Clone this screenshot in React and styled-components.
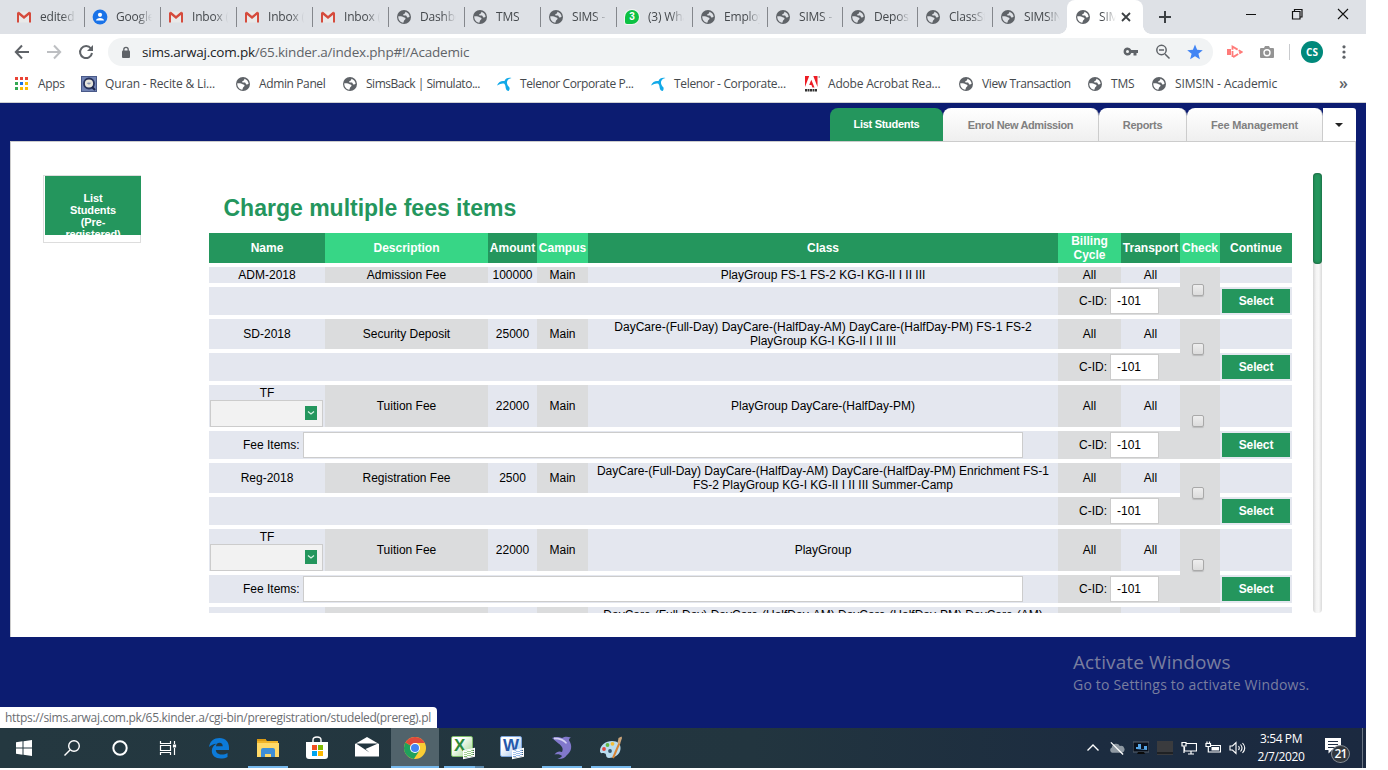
import React from 'react';
import styled, { createGlobalStyle } from 'styled-components';

const GREEN = '#24965d';
const LIGHT = '#37d686';
const NAVY = '#0c1c71';
const UI = '"Open Sans", "Noto Sans", sans-serif';
const ARIAL = '"Liberation Sans", Arial, sans-serif';

const Global = createGlobalStyle`
  * { box-sizing: border-box; }
  html, body { margin: 0; background: #fff; overflow: hidden; }
`;

const Screen = styled.div`
  width: 1366px;
  height: 768px;
  display: flex;
  flex-direction: column;
  position: relative;
  font-family: ${UI};
  overflow: hidden;
`;

/* ---------- browser chrome ---------- */
const TabStrip = styled.div`
  height: 34px;
  flex: none;
  background: #dee1e6;
  display: flex;
  padding-left: 9px;
`;
const BrowserTab = styled.div`
  width: ${p => p.$w || 76}px;
  height: 34px;
  display: flex;
  align-items: center;
  padding-left: 7px;
  background: linear-gradient(#84878c, #84878c) right 7px / 1px 20px no-repeat;
  ${p => p.$plain && 'background: none;'}
`;
const ActiveTab = styled.div`
  width: 76px;
  height: 34px;
  display: flex;
  align-items: center;
  padding-left: 8px;
  background: #fff;
  border-radius: 8px 8px 0 0;
  position: relative;
  &::before, &::after {
    content: '';
    position: absolute;
    bottom: 0;
    width: 8px;
    height: 8px;
  }
  &::before { left: -8px; background: radial-gradient(circle at 0 0, transparent 7.5px, #fff 8px); }
  &::after { right: -8px; background: radial-gradient(circle at 100% 0, transparent 7.5px, #fff 8px); }
`;
const TabText = styled.span`
  margin-left: 8px;
  width: ${p => p.$w || 36}px;
  overflow: hidden;
  white-space: nowrap;
  font-size: 12px;
  letter-spacing: -0.2px;
  line-height: 18px;
  color: #45494d;
  mask-image: linear-gradient(to right, #000 ${p => (p.$w || 36) - 14}px, transparent);
`;
const IconBox = styled.span`
  width: ${p => p.$w || 16}px;
  height: ${p => p.$h || 16}px;
  display: flex;
  align-items: center;
  justify-content: center;
  flex: none;
  svg { display: block; }
`;
const StripIcons = styled.div`
  display: flex;
  align-items: center;
  height: 34px;
  padding-left: 15px;
`;
const WindowButtons = styled.div`
  display: flex;
  margin-left: auto;
  height: 28px;
  align-items: center;
  gap: 30px;
  padding-right: 15px;
`;
const Toolbar = styled.div`
  height: 36px;
  flex: none;
  display: flex;
  align-items: center;
  background: #fff;
  padding-left: 14px;
`;
const NavIcons = styled.div`
  display: flex;
  gap: 16px;
  width: 94px;
`;
const Omnibox = styled.div`
  width: 1105px;
  height: 28px;
  border-radius: 14px;
  background: #f1f3f4;
  display: flex;
  align-items: center;
  padding: 0 10px;
`;
const Url = styled.span`
  margin-left: 8px;
  font-size: 13.5px;
  letter-spacing: -0.2px;
  line-height: 20px;
  color: #5f6368;
  b { font-weight: 400; color: #202124; }
`;
const OmniActions = styled.div`
  display: flex;
  margin-left: auto;
  gap: 16px;
`;
const Extensions = styled.div`
  display: flex;
  align-items: center;
  gap: 16px;
  padding-left: 14px;
`;
const Divider = styled.i`
  width: 1px;
  height: 16px;
  background: #c9cbce;
  margin: 0 -5px 0 -2px;
`;
const Avatar = styled.span`
  width: 22px;
  height: 22px;
  border-radius: 50%;
  background: #00897b;
  color: #fff;
  font: 700 10px/22px ${UI};
  text-align: center;
  margin: 0 -3px 0 0;
`;
const Bookmarks = styled.div`
  height: 33px;
  flex: none;
  display: flex;
  padding: 0 0 5px 14px;
  align-items: center;
  background: #fff;
  border-bottom: 1px solid #cfd0d2;
`;
const Bookmark = styled.div`
  width: ${p => p.$w}px;
  display: flex;
  align-items: center;
  gap: 8px;
  font-size: 12px;
  line-height: 18px;
  letter-spacing: ${p => p.$ls}px;
  white-space: nowrap;
  color: #45494d;
`;
const Overflow = styled.span`
  margin-left: auto;
  margin-right: 18px;
  margin-top: -2px;
  font-size: 16px;
  font-weight: 600;
  line-height: 18px;
  color: #5f6368;
`;

/* ---------- page ---------- */
const Page = styled.main`
  height: 625px;
  flex: none;
  background: ${NAVY};
  padding: 5px 10px 0;
  font-family: ${ARIAL};
`;
const PageTabs = styled.div`
  display: flex;
  justify-content: flex-end;
  height: 33px;
`;
const PageTab = styled.div`
  width: ${p => p.$w}px;
  border-radius: 8px 8px 0 0;
  border-right: 1px solid #ccc;
  background: linear-gradient(#fff, #efefef);
  color: #808080;
  font: 700 11px/34px ${ARIAL};
  letter-spacing: ${p => p.$ls}px;
  text-align: center;
  ${p => p.$active && `background: ${GREEN}; color: #fff; border-right: 0; line-height: 32px;`}
`;
const MoreTab = styled.div`
  width: 33px;
  background: #fff;
  border-radius: 0 3px 0 0;
  display: flex;
  align-items: center;
  justify-content: center;
  padding-right: 2px;
`;
const Panel = styled.section`
  height: 496px;
  background: #fff;
  border: 1px solid #ccc;
  border-bottom: 0;
  display: flex;
  padding: 31px 33px 24px 32px;
`;
const Side = styled.div`
  width: 98px;
  height: 68px;
  margin-top: 2px;
  border: 1px solid #ddd;
  padding-left: 1px;
`;
const SideButton = styled.div`
  width: 96px;
  height: 59px;
  background: ${GREEN};
  color: #fff;
  font: 700 11px/12px ${ARIAL};
  letter-spacing: -0.15px;
  text-align: center;
  padding: 16px 18px 0;
  overflow: hidden;
`;
const Content = styled.div`
  width: 1083px;
  height: 440px;
  margin-left: 68px;
  overflow: hidden;
`;
const Title = styled.h1`
  margin: 0;
  height: 60px;
  padding: 21px 0 0 14.5px;
  font: 700 23px/28px ${ARIAL};
  color: ${GREEN};
`;
const COLS = '116px 163px 49px 51px 470px 63px 59px 40px 72px';
const HeadRow = styled.div`
  display: grid;
  grid-template-columns: ${COLS};
  height: 30px;
  margin-bottom: 4px;
`;
const HeadCell = styled.div`
  display: flex;
  align-items: center;
  justify-content: center;
  text-align: center;
  color: #fff;
  font-weight: 700;
  font-size: 12px;
  line-height: 14px;
  background: ${p => (p.$light ? LIGHT : GREEN)};
`;
const FeeRow = styled.div`
  display: grid;
  grid-template-columns: ${COLS};
  grid-template-rows: ${p => p.$h}px 28px;
  row-gap: 4px;
  margin-bottom: 4px;
  font-size: 12px;
  line-height: 14px;
  color: #000;
`;
const Cell = styled.div`
  display: flex;
  flex-direction: column;
  align-items: center;
  justify-content: center;
  text-align: center;
  min-height: 0;
  white-space: pre;
  background: ${p => (p.$gray ? '#dbdcdd' : '#e4e7ef')};
`;
const CheckCell = styled(Cell)`
  grid-row: 1 / span 2;
  grid-column: 8;
  padding: 0 4px 2px 0;
`;
const FeeItems = styled.div`
  grid-column: 1 / span 5;
  background: #e4e7ef;
  display: flex;
  align-items: center;
  gap: 3px;
  padding-left: 34px;
`;
const WideInput = styled.div`
  width: 720px;
  height: 26px;
  border: 1px solid #ccc;
  background: #fff;
`;
const Cid = styled.div`
  grid-column: 6 / span 2;
  background: #dbdcdd;
  display: flex;
  align-items: center;
  padding-left: 21px;
  gap: 3px;
`;
const CidInput = styled.div`
  width: 49px;
  height: 26px;
  border: 1px solid #ccc;
  background: #fff;
  line-height: 24px;
  padding-left: 6px;
`;
const SelectCell = styled.div`
  grid-column: 9;
  background: #e4e7ef;
  padding: 2px;
`;
const SelectButton = styled.div`
  height: 24px;
  background: ${GREEN};
  color: #fff;
  font-weight: 700;
  letter-spacing: -0.15px;
  line-height: 24px;
  text-align: center;
`;
const Checkbox = styled.span`
  width: 12px;
  height: 12px;
  border: 1px solid #a9a9a9;
  border-radius: 2px;
  background: linear-gradient(#eee, #dcdcdc);
  box-shadow: 0 1px 1px rgba(0, 0, 0, 0.15);
`;
const DropBox = styled.div`
  width: 113px;
  height: 27px;
  margin-left: -2px;
  border: 1px solid #ccc;
  background: #f2f2f2;
  display: flex;
  align-items: center;
  justify-content: flex-end;
  padding: 0 5px 2px 0;
  flex: none;
`;
const DropIcon = styled.span`
  width: 12px;
  height: 14px;
  background: ${GREEN};
  display: flex;
  align-items: center;
  justify-content: center;
`;
const DropWrap = styled.div`
  padding-top: 1px;
  display: flex;
  flex-direction: column;
  align-items: center;
`;
const ScrollTrack = styled.div`
  width: 9px;
  height: 440px;
  margin-left: auto;
  border-radius: 4px;
  background: linear-gradient(to right, #d8d8d8, #f4f4f4 35%, #f8f8f8 65%, #dadada);
`;
const ScrollThumb = styled.div`
  height: 91px;
  border-radius: 4px;
  background: ${GREEN};
  box-shadow: inset 0 0 3px rgba(0, 0, 0, 0.5);
`;
const Watermark = styled.div`
  position: absolute;
  left: 1073px;
  top: 648px;
  color: #797e9f;
  white-space: nowrap;
`;
const MarkTitle = styled.div`
  font-size: 19px;
  line-height: 28px;
  letter-spacing: 0.1px;
`;
const MarkText = styled.div`
  font-size: 14px;
  line-height: 18px;
  letter-spacing: 0.2px;
`;
const StatusBubble = styled.div`
  position: absolute;
  left: 0;
  top: 707px;
  width: 437px;
  height: 21px;
  border-radius: 0 4px 0 0;
  background: #fff;
  padding-left: 5px;
  font-size: 12px;
  line-height: 21px;
  letter-spacing: -0.31px;
  color: #6a6d71;
  white-space: nowrap;
`;

/* ---------- taskbar ---------- */
const Taskbar = styled.footer`
  height: 40px;
  flex: none;
  display: flex;
  background: linear-gradient(to right, #243840 0%, #22353f 55%, #1c2c40 80%, #1b2940 100%);
`;
const TaskItem = styled.div`
  width: ${p => p.$w || 49}px;
  height: 40px;
  display: flex;
  align-items: center;
  justify-content: center;
  background: ${p => (p.$active ? '#51636b' : 'transparent')};
  ${p => p.$open && 'background: linear-gradient(#76b9ed, #76b9ed) center bottom / 40px 2px no-repeat;'}
  ${p => p.$active && 'box-shadow: inset 0 -2px #76b9ed;'}
  ${p => p.$stack && 'background: linear-gradient(to right, #76b9ed 31px, #5a88ab 31px) center bottom / 40px 2px no-repeat;'}
`;
const Tray = styled.div`
  margin-left: auto;
  display: flex;
  align-items: center;
  gap: 8px;
  padding-right: 3px;
`;
const Clock = styled.div`
  width: 60px;
  text-align: center;
  color: #fff;
  font-size: 12px;
  line-height: 18px;
  letter-spacing: -0.4px;
  white-space: nowrap;
  margin-left: -3px;
`;
const Peek = styled.i`
  width: 1px;
  height: 40px;
  background: #6b7684;
  margin-left: 3px;
`;

/* ---------- icons ---------- */
const Globe = () => (
  <svg width="16" height="16" viewBox="0 0 16 16">
    <path
      fill="#5f6368"
      fillRule="evenodd"
      d="M8 1a7 7 0 1 1 0 14A7 7 0 0 1 8 1zM9.300 2.700c.1 1-.3 1.700-1 2-.9.4-1.500.9-1 1.500.7.6 1.800 0 2.700.4.8.4.7 1.500 1.400 1.800.8.3 1.500-.1 2.200-.7C13.400 5.200 11.600 3.300 9.300 2.700zM2.300 7.200C2 10.500 4.200 13.300 7.200 13.700c.7-.6.500-1.600.9-2.200.5-.7 1.700-1.200 1.400-2.200-.4-.9-1.700-.5-2.400-1.200C6.100 7.100 4.100 7.400 2.300 7.200z"
    />
  </svg>
);
const Gmail = () => (
  <svg width="16" height="16" viewBox="0 0 16 16">
    <path d="M2 2.500h12v11H2z" fill="#e9e9e9" />
    <path d="M2 3.500 8 8.500l6-5" fill="none" stroke="#d54b3d" strokeWidth="2.300" />
    <path d="M1 3v10.500h2V5zM15 3v10.500h-2V5z" fill="#d54b3d" />
  </svg>
);
const Contacts = () => (
  <svg width="16" height="16" viewBox="0 0 16 16">
    <circle cx="8" cy="8" r="7.400" fill="#1a73e8" />
    <circle cx="8" cy="5.800" r="2.100" fill="#fff" />
    <path d="M4 11.500c0-3.500 8-3.500 8 0z" fill="#fff" />
  </svg>
);
const BadgeText = styled.span`
  width: 14px;
  height: 14px;
  border-radius: 7px 7px 7px 2px;
  background: #0dc143;
  color: #fff;
  font: 700 10px/14px ${ARIAL};
  text-align: center;
  box-shadow: 0 0 0 1px #f1f6f2;
`;
const Stroke = ({ d, w = 16, h = 16, c = '#5f6368', s = 2, children, ...r }) => (
  <svg width={w} height={h} viewBox={`0 0 ${w} ${h}`} fill="none" stroke={c} strokeWidth={s} {...r}>
    <path d={d} />
    {children}
  </svg>
);
const Telenor = () => (
  <svg width="16" height="16" viewBox="0 0 16 16" fill="#11a9e8">
    <path d="M1 9.500C2.500 5.500 5.500 4.500 8.500 5 9.500 2.500 12 1.300 15.500 2c-2.500.6-4 1.800-4.500 3.800-.3 2.200.8 4 2.500 5.700.3 1.500 0 2.700-.8 3.500-1.500 0-2.700-1-3-3-.2-2.200-.7-3.500-1.400-4.300C6.500 7 4 7.800 1 9.500z" />
  </svg>
);
const Adobe = () => (
  <svg width="16" height="16" viewBox="0 0 16 16">
    <path d="M1 0h12.500v11.500H1z" fill="#fff" />
    <path d="M1 0h4.200L1 11zM9.300 0h4.200v11zM7.300 3.800l3.200 7.700H8.400l-1-2.500H5.200z" fill="#ed1c24" />
    <path d="M1 14.300h12.500" stroke="#333" strokeWidth="2.600" strokeDasharray="2 .5" />
    <path d="M14.500 1h1.500" stroke="#666" />
  </svg>
);
const Quran = () => (
  <svg width="16" height="16" viewBox="0 0 16 16">
    <path d="M0 0h16v16H0z" fill="#4a5a8a" />
    <path d="M1 1h14v14H1z" fill="#7183b4" />
    <circle cx="8" cy="7.500" r="5" fill="#e8e6dc" stroke="#27325c" strokeWidth="1.800" />
    <path d="M5.500 7c2-1 3-.5 5-.2l-2.500 2z" fill="#8894b4" />
    <path d="m11 11 3 3" stroke="#1e274b" strokeWidth="2" />
  </svg>
);
const AppsIcon = () => (
  <svg width="16" height="16" viewBox="0 0 16 16">
    {['#ea4335', '#ea4335', '#ea4335', '#34a853', '#1a73e8', '#fbbc04', '#34a853', '#fbbc04', '#fbbc04'].map((c, i) => (
      <rect key={i} x={1 + (i % 3) * 5} y={1 + Math.floor(i / 3) * 5} width="3" height="3" fill={c} />
    ))}
  </svg>
);
const Edge = () => (
  <svg width="22" height="22" viewBox="0 0 22 22">
    <path d="M1 10C2 4 6 1 11.500 1 17.500 1 21 5 21 10.500V13H7.800c.2 3 2.800 4.500 6 4.500 2.200 0 4-.5 5.700-1.500v4c-2 1-4.200 1.500-6.700 1.500C7.300 21.500 3.800 18.500 3.800 14c0-3.300 1.700-5.800 4.700-7.300C5.500 7 3 8 1 10zm7-.7h6.700c0-2.300-1-3.600-3.200-3.600S8.200 7.100 8 9.300z" fill="#0c7ad8" />
  </svg>
);
const Explorer = () => (
  <svg width="22" height="20" viewBox="0 0 22 20">
    <path d="M0 1h8l2 2h11v15H0z" fill="#f0b429" />
    <path d="M0 1h9v2H0z" fill="#d99a14" />
    <path d="M0 5h22v14H0z" fill="#ffd968" />
    <path d="M4 12q0-2 2-2h10q2 0 2 2v7h-4v-3H8v3H4z" fill="#3e8ed6" />
  </svg>
);
const Store = () => (
  <svg width="24" height="24" viewBox="0 0 24 24">
    <path d="M8 7V4q0-3 4-3t4 3v3" fill="none" stroke="#fff" strokeWidth="1.400" />
    <path d="M1 6h22v14q0 3-3 3H4q-3 0-3-3z" fill="#fff" />
    <path d="M7 9h5v5H7z" fill="#f25022" /><path d="M13 9h5v5h-5z" fill="#7fba00" />
    <path d="M7 15h5v5H7z" fill="#00a4ef" /><path d="M13 15h5v5h-5z" fill="#ffb900" />
  </svg>
);
const Chrome = () => (
  <svg width="22" height="22" viewBox="0 0 22 22">
    <circle cx="11" cy="11" r="11" fill="#fbcd34" />
    <path d="M11 11 1.470 5.500A11 11 0 0 0 9.900 21.950L15.500 13.600z" fill="#20a15c" />
    <path d="M11 11 1.470 5.500A11 11 0 0 1 20.530 5.500L20.800 6H11z" fill="#df4a3c" />
    <circle cx="11" cy="11" r="5" fill="#fff" /><circle cx="11" cy="11" r="4" fill="#4285f4" />
  </svg>
);
const OfficeTile = styled.span`
  position: relative;
  width: 22px;
  height: 21px;
  margin: -3px 3px 0 0;
  border: 1px solid ${p => p.$edge};
  border-radius: 2px;
  background: linear-gradient(135deg, #fff 30%, ${p => p.$bg} 100%);
  color: ${p => p.$c};
  font: 700 17px/18px ${ARIAL};
  padding-left: 2px;
  &::after {
    content: '';
    position: absolute;
    left: 11px;
    top: 12px;
    width: 10px;
    height: 7px;
    transform: skewY(-12deg);
    border: 1px solid #fff;
    background: repeating-linear-gradient(#fff 0 1px, ${p => p.$edge}66 1px 2px);
  }
`;
const Dolphin = () => (
  <svg width="24" height="24" viewBox="0 0 24 24">
    <path d="M2 2c3-1.500 7-1.500 10 0 3-1.600 5-1.500 9-.5-1.500.8-2 1.700-2 2.700 3.500 5 3 11-2.500 15.300-1 2-4 3.800-9 3.500 2.500-1 4-2 4.500-3-1.500-1.800-4.500-2.300-7.500-1.500 2-3 5-3.800 7.500-2.500 1.500-3 .5-5.500-3.500-8.500C7 6.500 5 4.500 2 2z" fill="#8178cc" />
    <path d="M4 2.400c5 0 10 1.600 12.500 5" stroke="#d3d0f3" strokeWidth="1.600" fill="none" />
  </svg>
);
const Paint = () => (
  <svg width="24" height="24" viewBox="0 0 24 24">
    <path d="M1 15C1 9 7 5 13 5c6 0 9 3 8.500 8C21 19 15 22 10 22c-4 0-2-4-4-4.500C4 17 1 18 1 15z" fill="#b9dcef" />
    <circle cx="5" cy="13" r="1.900" fill="#e2473f" /><circle cx="8.500" cy="9" r="1.900" fill="#63b744" />
    <circle cx="13.500" cy="7.800" r="1.900" fill="#f5bd34" /><circle cx="11" cy="15" r="1.900" fill="#37566d" />
    <path d="M14 22 20.500 7" stroke="#d98434" strokeWidth="2" /><path d="m18.500 7 1-5 3-1.500.5 1.500-2 6z" fill="#caa47a" />
  </svg>
);
const BubbleNum = styled.span`
  position: absolute;
  left: 6px;
  top: 12px;
  width: 19px;
  height: 18px;
  border-radius: 50%;
  border: 1px solid #8a9097;
  background: #33383e;
  color: #fff;
  font: 600 12px/15px ${UI};
  letter-spacing: -0.8px;
  text-align: center;
`;
const Notify = styled.div`
  position: relative;
  width: 26px;
  height: 30px;
  padding-top: 4px;
  margin-left: 6px;
`;

const browserTabs = [
  ['edited', Gmail], ['Google', Contacts], ['Inbox (', Gmail], ['Inbox (', Gmail], ['Inbox (', Gmail],
  ['Dashbo', Globe], ['TMS', Globe], ['SIMS -', Globe], ['(3) Wha', 'wa'], ['Employ', Globe, 75],
  ['SIMS -', Globe, 75], ['Deposi', Globe, 75], ['ClassSt', Globe, 75], ['SIMS!N', Globe, 74],
];
const bookmarks = [
  ['Apps', AppsIcon, 67, -0.35], ['Quran - Recite & Li...', Quran, 154, -0.15], ['Admin Panel', Globe, 107, -0.38],
  ['SimsBack | Simulato...', Globe, 154, -0.48], ['Telenor Corporate P...', Telenor, 154, -0.4],
  ['Telenor - Corporate...', Telenor, 154, -0.33], ['Adobe Acrobat Rea...', Adobe, 154, -0.2],
  ['View Transaction', Globe, 129, -0.38], ['TMS', Globe, 64, -0.2], ['SIMS!N - Academic', Globe, 150, -0.08],
];
const heads = ['Name', 'Description', 'Amount', 'Campus', 'Class', 'Billing\nCycle', 'Transport', 'Check', 'Continue'];
const fees = [
  ['ADM-2018', 'Admission Fee', '100000', 'PlayGroup FS-1 FS-2 KG-I KG-II I II III', 16],
  ['SD-2018', 'Security Deposit', '25000', 'DayCare-(Full-Day) DayCare-(HalfDay-AM) DayCare-(HalfDay-PM) FS-1 FS-2\nPlayGroup KG-I KG-II I II III', 30],
  ['TF', 'Tuition Fee', '22000', 'PlayGroup DayCare-(HalfDay-PM)', 42],
  ['Reg-2018', 'Registration Fee', '2500', 'DayCare-(Full-Day) DayCare-(HalfDay-AM) DayCare-(HalfDay-PM) Enrichment FS-1\nFS-2 PlayGroup KG-I KG-II I II III Summer-Camp', 30],
  ['TF', 'Tuition Fee', '22000', 'PlayGroup', 42],
  ['', '', '', 'DayCare-(Full-Day) DayCare-(HalfDay-AM) DayCare-(HalfDay-PM) DayCare-(AM)\n ', 30],
];

function Fee({ data: [name, desc, amount, cls, h] }) {
  const tf = name === 'TF';
  return (
    <FeeRow $h={h}>
      <Cell>
        {tf ? (
          <DropWrap>
            <span>TF</span>
            <DropBox>
              <DropIcon>
                <Stroke w={8} h={6} c="#d5f2e3" s={1.3} d="M1 1.500 4 4l3-2.500" />
              </DropIcon>
            </DropBox>
          </DropWrap>
        ) : name}
      </Cell>
      <Cell $gray>{desc}</Cell>
      <Cell>{amount}</Cell>
      <Cell $gray>{name && 'Main'}</Cell>
      <Cell>{cls}</Cell>
      <Cell $gray>{name && 'All'}</Cell>
      <Cell>{name && 'All'}</Cell>
      <CheckCell $gray>{name && <Checkbox />}</CheckCell>
      <Cell />
      {name && (
        <>
          <FeeItems>{tf && <><span>Fee Items:</span><WideInput /></>}</FeeItems>
          <Cid><span>C-ID:</span><CidInput>-101</CidInput></Cid>
          <SelectCell><SelectButton>Select</SelectButton></SelectCell>
        </>
      )}
    </FeeRow>
  );
}

export default function App() {
  return (
    <Screen>
      <Global />
      <TabStrip>
        {browserTabs.map(([t, Icon, w], i) => (
          <BrowserTab key={i} $w={w} $plain={i === 13}>
            <IconBox>{Icon === 'wa' ? <BadgeText>3</BadgeText> : <Icon />}</IconBox>
            <TabText>{t}</TabText>
          </BrowserTab>
        ))}
        <ActiveTab>
          <IconBox><Globe /></IconBox>
          <TabText $w={17}>SIM</TabText>
          <IconBox $w={20}><Stroke w={10} h={10} d="m1 1 8 8M9 1 1 9" c="#3c4043" s={1.8} /></IconBox>
        </ActiveTab>
        <StripIcons><Stroke w={14} h={14} d="M7 1v12M1 7h12" c="#3c4043" /></StripIcons>
        <WindowButtons>
          <Stroke d="M3 8.500h10" c="#111" s={1} />
          <Stroke d="M3.500 5.500h7.500v7.500H3.500zM5.500 5.500v-2h7.500v7.500h-2" c="#111" s={1.2} />
          <Stroke d="m3 3 10 10M13 3 3 13" c="#111" s={1.1} />
        </WindowButtons>
      </TabStrip>
      <Toolbar>
        <NavIcons>
          <Stroke d="M15 8H2M8 1.500 1.800 8 8 14.500" />
          <Stroke d="M1 8h13M8 1.500 14.200 8 8 14.500" c="#bdbfc2" />
          <Stroke d="M12.900 4.500A6 6 0 1 0 14 9">
            <path d="M15 1v6H9z" fill="#5f6368" stroke="none" />
          </Stroke>
        </NavIcons>
        <Omnibox>
          <IconBox>
            <svg width="10" height="13" viewBox="0 0 10 13">
              <rect x="1" y="4.500" width="8" height="7.500" rx="1" fill="#5f6368" />
              <path d="M2.800 5V3.500a2.200 2.200 0 0 1 4.400 0V5" fill="none" stroke="#5f6368" strokeWidth="1.300" />
            </svg>
          </IconBox>
          <Url><b>sims.arwaj.com.pk</b>/65.kinder.a/index.php#!/Academic</Url>
          <OmniActions>
            <svg width="16" height="16" viewBox="0 0 16 16" fill="#5f6368">
              <path fillRule="evenodd" d="M4.500 3.500A4 4 0 0 1 8.300 6H15v3h-1.500v2.500h-3V9H8.300A4 4 0 1 1 4.500 3.500zm0 2.500a1.500 1.500 0 1 0 0 3 1.500 1.500 0 0 0 0-3z" />
            </svg>
            <Stroke s={1.5} d="m10 10 4.500 4.500M4 6h5"><circle cx="6.500" cy="6" r="4.700" /></Stroke>
            <svg width="16" height="16" viewBox="0 0 16 16">
              <path d="m8 .5 2.100 5.300 5.700.4-4.400 3.600 1.500 5.500L8 12.300l-4.900 3 1.500-5.500L.2 6.200l5.700-.4z" fill="#4285f4" />
            </svg>
          </OmniActions>
        </Omnibox>
        <Extensions>
          <svg width="16" height="16" viewBox="0 0 16 16">
            <path d="M0 5h4v6H0z" fill="#ff7b79" /><path d="M5.500 2.500 14.500 8l-9 5.500z" fill="none" stroke="#ff7b79" strokeWidth="1.800" strokeDasharray="6 1.200" />
          </svg>
          <svg width="16" height="16" viewBox="0 0 16 16">
            <path d="M2 4h3l1-2h4l1 2h3q1 0 1 1v8q0 1-1 1H2q-1 0-1-1V5q0-1 1-1z" fill="#949494" />
            <circle cx="8" cy="8.800" r="3" fill="#949494" stroke="#fff" strokeWidth="1.400" />
          </svg>
          <Divider />
          <Avatar>CS</Avatar>
          <svg width="16" height="16" viewBox="0 0 16 16" fill="#5f6368">
            <circle cx="8" cy="2.800" r="1.600" /><circle cx="8" cy="8" r="1.600" /><circle cx="8" cy="13.200" r="1.600" />
          </svg>
        </Extensions>
      </Toolbar>
      <Bookmarks>
        {bookmarks.map(([t, Icon, w, ls]) => (
          <Bookmark key={t} $w={w} $ls={ls}><IconBox><Icon /></IconBox>{t}</Bookmark>
        ))}
        <Overflow>»</Overflow>
      </Bookmarks>
      <Page>
        <PageTabs>
          <PageTab $w={113} $ls={-0.3} $active>List Students</PageTab>
          <PageTab $w={156} $ls={-0.38}>Enrol New Admission</PageTab>
          <PageTab $w={88} $ls={-0.3}>Reports</PageTab>
          <PageTab $w={136} $ls={-0.15}>Fee Management</PageTab>
          <MoreTab><svg width="8" height="4" viewBox="0 0 8 4"><path d="M0 0h8L4 4z" fill="#222" /></svg></MoreTab>
        </PageTabs>
        <Panel>
          <Side><SideButton>List Students (Pre-registered)</SideButton></Side>
          <Content>
            <Title>Charge multiple fees items</Title>
            <HeadRow>
              {heads.map((h, i) => <HeadCell key={h} $light={i % 2 === 1}>{h}</HeadCell>)}
            </HeadRow>
            {fees.map((f, i) => <Fee key={i} data={f} />)}
          </Content>
          <ScrollTrack><ScrollThumb /></ScrollTrack>
        </Panel>
      </Page>
      <Taskbar>
        <TaskItem $w={48}><svg width="16" height="16" viewBox="0 0 16 16" fill="#fff"><path d="M0 2.200 6.500 1.300v6.200H0zM7.500 1.200 16 0v7.500H7.500zM0 8.500h6.500v6.200L0 13.800zM7.500 8.500H16V16l-8.500-1.200z" /></svg></TaskItem>
        <TaskItem $w={48}><Stroke w={18} h={18} c="#fff" s={1.4} d="M1.500 16.500 7 11"><circle cx="11" cy="7" r="5.300" /></Stroke></TaskItem>
        <TaskItem $w={48}><Stroke w={18} h={18} c="#fff" s={2} d=""><circle cx="9" cy="9" r="6.700" /></Stroke></TaskItem>
        <TaskItem $w={48}><Stroke w={18} h={18} c="#fff" s={1.2} d="M1.500 2v2.500h10V2M1.500 16v-2.500h10V16M1.500 6.500h10v5h-10zM15.500 2v3M15.500 9v7"><path d="M14.500 6h2v2h-2z" fill="#fff" /></Stroke></TaskItem>
        <TaskItem $w={53}><Edge /></TaskItem>
        <TaskItem $w={46} $open><Explorer /></TaskItem>
        <TaskItem $w={51}><Store /></TaskItem>
        <TaskItem $w={49}><svg width="24" height="22" viewBox="0 0 24 22"><path d="M0 7 12 0l12 7v12.500H0z" fill="#fff" /><path d="M1 6.500h22L10.500 12l4 3.500z" fill="#22353f" /></svg></TaskItem>
        <TaskItem $w={48} $active><Chrome /></TaskItem>
        <TaskItem $stack><OfficeTile $c="#2c8a3c" $edge="#7dbb6a" $bg="#9fd58e">X</OfficeTile></TaskItem>
        <TaskItem><OfficeTile $c="#2558ab" $edge="#7ea6dd" $bg="#9cbfec">W</OfficeTile></TaskItem>
        <TaskItem $open><Dolphin /></TaskItem>
        <TaskItem $open><Paint /></TaskItem>
        <Tray>
          <Stroke c="#fff" s={1.4} d="m2.500 10.500 5.500-5.500 5.500 5.500" />
          <svg width="16" height="16" viewBox="0 0 17 16">
            <path d="M3 13a3 3 0 0 1 0-5.500A4.500 4.500 0 0 1 11.500 6 3.500 3.500 0 0 1 14 13z" fill="#8e98a2" />
            <path d="m2 2 13 13" stroke="#fff" strokeWidth="1.400" />
          </svg>
          <svg width="16" height="16" viewBox="0 0 16 16">
            <path d="M0 2h16v10H0z" fill="#09101c" stroke="#59636f" strokeWidth="1" /><path d="M3 9V7h2V4h3v5h3V6h3v4z" fill="#56a6e6" /><path d="M5 12h6l1 2H4z" fill="#0a0a0a" />
          </svg>
          <svg width="16" height="16" viewBox="0 0 16 16"><path d="M0 1h16v14H0z" fill="#3a3b3e" /><path d="M0 12h16v2H0z" fill="#1f2124" /></svg>
          <Stroke c="#fff" s={1.200} d="M5.500 3.500h10v7.500h-12V7M7 14h6M10 11v3M1 2.500h4v3.500H1zM3 6v7" />
          <svg width="16" height="16" viewBox="0 0 16 16">
            <path d="M5 5.500h10.500v6.500H5M1 3.500h4.500v3H1zM2 1.500v2M4.500 1.500v2M3.300 7v5H6" fill="none" stroke="#fff" strokeWidth="1.200" /><path d="M6.500 7h7.500v3.500H6.500z" fill="#fff" />
          </svg>
          <Stroke w={17} c="#fff" s={1.100} d="M1 6h2.500L7 2.500v11L3.500 10H1zM9.500 6q1.500 2 0 4M11.500 4.500q3 3.500 0 7M13.500 3q4.500 5 0 10" />
          <Clock>3:54 PM<br />2/7/2020</Clock>
          <Notify>
            <svg width="16" height="16" viewBox="0 0 16 16"><path d="M0 0h16v12H7l-3.500 3.500V12H0z" fill="#fff" /><path d="M3 3.500h10M3 6.500h10M3 9.500h7" stroke="#223046" strokeWidth="1.200" /></svg>
            <BubbleNum>21</BubbleNum>
          </Notify>
          <Peek />
        </Tray>
      </Taskbar>
      <Watermark>
        <MarkTitle>Activate Windows</MarkTitle>
        <MarkText>Go to Settings to activate Windows.</MarkText>
      </Watermark>
      <StatusBubble>https://sims.arwaj.com.pk/65.kinder.a/cgi-bin/preregistration/studeled(prereg).pl</StatusBubble>
    </Screen>
  );
}
